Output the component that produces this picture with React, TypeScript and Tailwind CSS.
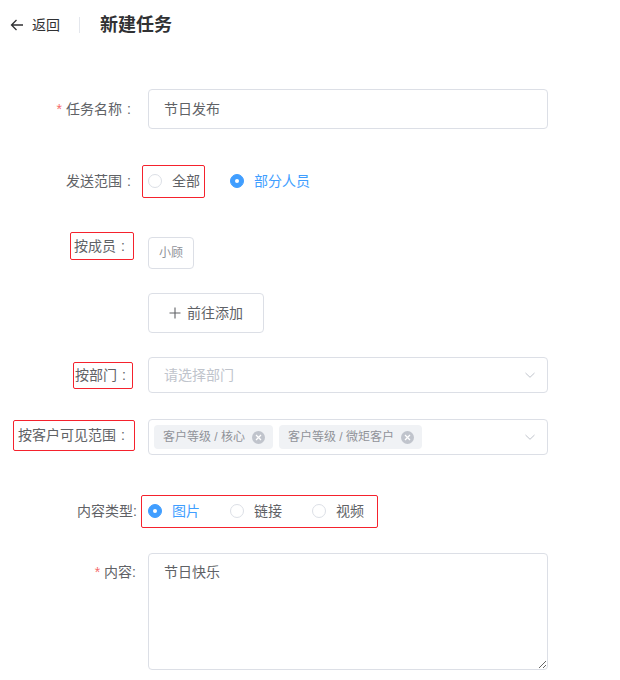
import React from "react";

const font = "font-['Liberation_Sans','Noto_Sans_CJK_SC',sans-serif]";

// 中文全角冒号居中显示
const Colon = () => <span className="inline-block w-[14px] text-center">:</span>;

const Radio = ({ label, checked }: { label: string; checked?: boolean }) => (
  <span className="flex items-center gap-[10px]">
    {checked ? (
      <span className="w-[14px] h-[14px] rounded-full bg-[#409eff] border border-[#409eff] flex items-center justify-center">
        <span className="w-[4px] h-[4px] rounded-full bg-white" />
      </span>
    ) : (
      <span className="w-[14px] h-[14px] rounded-full bg-white border border-[#dcdfe6]" />
    )}
    <span className={`text-[14px] ${checked ? "text-[#409eff]" : "text-[#606266]"}`}>{label}</span>
  </span>
);

const Chevron = () => (
  <svg width="12" height="12" viewBox="0 0 12 12" className="text-[#c0c4cc]">
    <path d="M1.5 4 L6 8.3 L10.5 4" fill="none" stroke="currentColor" strokeWidth="1" />
  </svg>
);

const Tag = ({ text }: { text: string }) => (
  <span className="h-[24px] pl-[9px] pr-[8px] rounded-[4px] bg-[#f0f2f5] flex items-center gap-[7px] text-[12px] text-[#909399]">
    {text}
    <span className="w-[13px] h-[13px] rounded-full bg-[#c0c4cc] flex items-center justify-center">
      <svg width="7" height="7" viewBox="0 0 7 7">
        <path d="M1 1 L6 6 M6 1 L1 6" stroke="white" strokeWidth="1.3" />
      </svg>
    </span>
  </span>
);

export default function App() {
  return (
    <div className={`w-[620px] h-[680px] bg-white overflow-hidden ${font}`}>
      {/* 顶部 */}
      <div className="h-[50px] flex items-center pl-[10px]">
        <button className="flex items-center gap-[8px] text-[14px] text-[#303133]">
          <svg width="14" height="14" viewBox="0 0 14 14">
            <path d="M13 7 H1.5 M6.5 2 L1.5 7 L6.5 12" fill="none" stroke="#303133" strokeWidth="1.3" />
          </svg>
          返回
        </button>
        <span className="w-px h-[16px] bg-[#e4e7ed] ml-[19px] mr-[20px]" />
        <h1 className="text-[18px] font-bold text-[#303133]">新建任务</h1>
      </div>

      {/* 任务名称 */}
      <div className="flex items-center mt-[39px]">
        <div className="w-[136px] flex justify-end text-[14px] text-[#606266]">
          <span className="text-[#f56c6c] mr-[4px]">*</span>任务名称<Colon />
        </div>
        <div className="ml-[12px] w-[400px] h-[40px] border border-[#dcdfe6] rounded-[4px] flex items-center px-[15px] text-[14px] text-[#606266]">
          节日发布
        </div>
      </div>

      {/* 发送范围 */}
      <div className="flex items-center mt-[32px] h-[40px]">
        <div className="w-[136px] flex justify-end text-[14px] text-[#606266]">
          发送范围<Colon />
        </div>
        <div className="ml-[6px] flex items-center">
          <span className="h-[33px] border border-[#f5222d] rounded-[2px] pl-[5px] pr-[4px] flex items-center">
            <Radio label="全部" />
          </span>
          <span className="ml-[25px]">
            <Radio label="部分人员" checked />
          </span>
        </div>
      </div>

      {/* 按成员 */}
      <div className="flex items-start mt-[36px]">
        <div className="w-[136px] flex justify-end">
          <span className="-mt-[5px] mr-[2px] h-[28px] px-[3px] border border-[#f5222d] rounded-[2px] flex items-center text-[14px] text-[#606266]">
            按成员<Colon />
          </span>
        </div>
        <span className="ml-[12px] h-[32px] px-[10px] border border-[#dcdfe6] rounded-[4px] flex items-center text-[12px] text-[#909399]">
          小顾
        </span>
      </div>

      {/* 前往添加 */}
      <div className="flex mt-[24px] pl-[148px]">
        <button className="h-[40px] w-[116px] border border-[#dcdfe6] rounded-[4px] flex items-center justify-center gap-[6px] text-[14px] text-[#606266]">
          <svg width="12" height="12" viewBox="0 0 12 12">
            <path d="M6 0.5 V11.5 M0.5 6 H11.5" stroke="#606266" strokeWidth="1.1" />
          </svg>
          前往添加
        </button>
      </div>

      {/* 按部门 */}
      <div className="flex items-center mt-[24px]">
        <div className="w-[136px] flex justify-end">
          <span className="mr-[3px] h-[27px] px-[1px] border border-[#f5222d] rounded-[2px] flex items-center text-[14px] text-[#606266]">
            按部门<Colon />
          </span>
        </div>
        <div className="ml-[12px] w-[400px] h-[36px] border border-[#dcdfe6] rounded-[4px] flex items-center justify-between pl-[15px] pr-[11px] text-[14px] text-[#c0c4cc]">
          请选择部门
          <Chevron />
        </div>
      </div>

      {/* 按客户可见范围 */}
      <div className="flex items-center mt-[26px]">
        <div className="w-[136px] flex justify-end">
          <span className="-mt-[3px] mr-[1px] h-[31px] px-[4px] border border-[#f5222d] rounded-[2px] flex items-center text-[14px] text-[#606266]">
            按客户可见范围<Colon />
          </span>
        </div>
        <div className="ml-[12px] w-[400px] h-[36px] border border-[#dcdfe6] rounded-[4px] flex items-center justify-between pl-[5px] pr-[11px]">
          <div className="flex items-center gap-[6px]">
            <Tag text="客户等级 / 核心" />
            <Tag text="客户等级 / 微矩客户" />
          </div>
          <Chevron />
        </div>
      </div>

      {/* 内容类型 */}
      <div className="flex items-center mt-[36px] h-[40px]">
        <div className="w-[137px] flex justify-end text-[14px] text-[#606266]">内容类型:</div>
        <div className="ml-[4px] h-[33px] w-[237px] border border-[#f5222d] rounded-[2px] pl-[6px] flex items-center gap-[30px]">
          <Radio label="图片" checked />
          <Radio label="链接" />
          <Radio label="视频" />
        </div>
      </div>

      {/* 内容 */}
      <div className="flex items-start mt-[22px]">
        <div className="w-[136px] flex justify-end text-[14px] text-[#606266] pt-[9px]">
          <span className="text-[#f56c6c] mr-[4px]">*</span>内容:
        </div>
        <textarea
          defaultValue="节日快乐"
          className="ml-[12px] w-[400px] h-[117px] border border-[#dcdfe6] rounded-[4px] px-[15px] py-[8px] text-[14px] text-[#606266] outline-none leading-[1.5]"
        />
      </div>
    </div>
  );
}
